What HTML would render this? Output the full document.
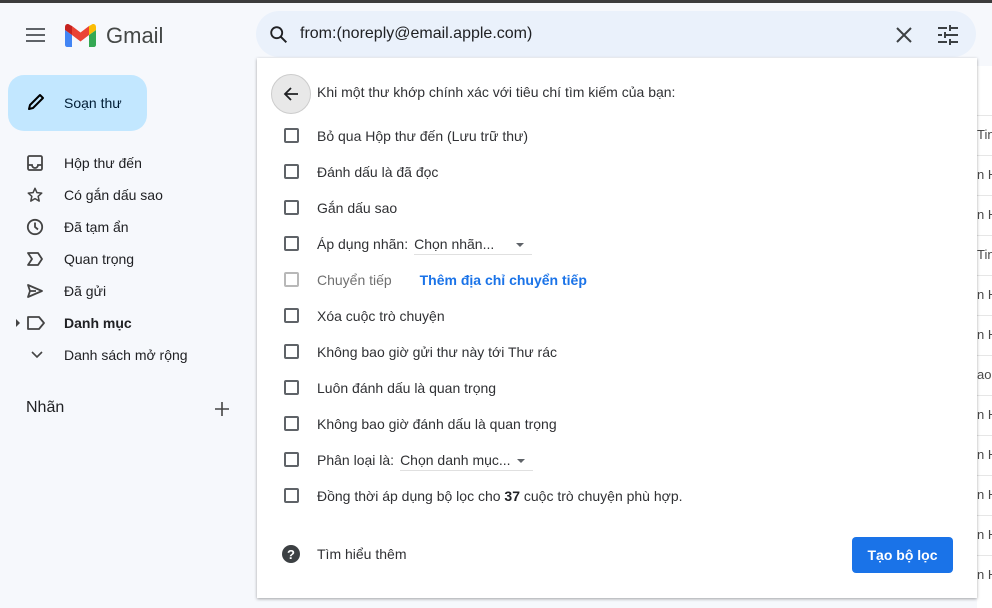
<!DOCTYPE html>
<html><head><meta charset="utf-8"><style>
*{box-sizing:border-box;margin:0;padding:0}
body{width:992px;height:608px;overflow:hidden;background:#f6f8fc;font-family:"Liberation Sans",Arial,sans-serif;color:#202124;position:relative}
.abs{position:absolute}
.topbar{left:0;top:0;width:992px;height:3px;background:#3c3c3c}
.nav{left:64px;font-size:14px;color:#202124}
.navi{left:26px}
.right{left:977px;top:115px;width:15px;height:493px;background:#fff}
.rline{left:977px;width:15px;height:1px;background:#e6e6e6}
.rt{left:977px;font-size:13px;color:#4a4a4a;white-space:nowrap;overflow:hidden;width:15px}
.panel{left:257px;top:58px;width:720px;height:540px;background:#fff;box-shadow:0 1px 3px rgba(0,0,0,.35)}
.row{position:absolute;left:0;height:20px;font-size:14px;color:#303134;line-height:20px}
.cb{position:absolute;left:27px;top:2px;width:15px;height:15px;border:2px solid #5f6368;border-radius:2px}
.lbl{position:absolute;left:60px;white-space:nowrap}
.sel{display:inline-block;border-bottom:1px solid #e0e0e0;margin-left:6px;padding-right:8px;position:relative}
.tri{display:inline-block;width:0;height:0;border-left:4px solid transparent;border-right:4px solid transparent;border-top:4px solid #5f6368;vertical-align:middle;margin-left:22px}
</style></head><body>
<div class="abs topbar"></div>
<svg class="abs" style="left:26px;top:27px" width="20" height="16"><rect x="0" y="1" width="19" height="2" fill="#5f6368"/><rect x="0" y="7" width="19" height="2" fill="#5f6368"/><rect x="0" y="13" width="19" height="2" fill="#5f6368"/></svg>
<svg class="abs" style="left:65px;top:24px" width="31" height="23" viewBox="0 0 31 23">
<path d="M2 23h5V11L0 6v15c0 1 1 2 2 2z" fill="#4285f4"/>
<path d="M24 23h5c1 0 2-1 2-2V6l-7 5z" fill="#34a853"/>
<path d="M24 2v9l7-5V3c0-3-3-4-5-2z" fill="#fbbc04"/>
<path d="M7 11V2l8.5 6.5L24 2v9l-8.5 6.5z" fill="#ea4335"/>
<path d="M0 3v3l7 5V2L5 1C3-1 0 0 0 3z" fill="#c5221f"/>
</svg>
<div class="abs" style="left:106px;top:23px;font-size:22px;color:#444746">Gmail</div>
<div class="abs" style="left:256px;top:11px;width:720px;height:46px;border-radius:24px;background:#eaf1fb"></div>
<svg class="abs" style="left:268px;top:24px" width="22" height="22" viewBox="0 0 24 24"><circle cx="9.5" cy="9.5" r="6" fill="none" stroke="#202124" stroke-width="2"/><path d="M14 14l6 6" stroke="#202124" stroke-width="2.2"/></svg>
<div class="abs" style="left:300px;top:25px;font-size:16px;color:#202124">from:(noreply@email.apple.com)</div>
<svg class="abs" style="left:895px;top:26px" width="18" height="18"><path d="M2 2l14 14M16 2L2 16" stroke="#3c4043" stroke-width="2"/></svg>
<svg class="abs" style="left:938px;top:25px" width="20" height="20" viewBox="0 0 20 20"><g fill="#3c4043"><rect x="0" y="2" width="9" height="2"/><rect x="13" y="2" width="7" height="2"/><rect x="11" y="0" width="2" height="6"/><rect x="0" y="9" width="4" height="2"/><rect x="8" y="9" width="12" height="2"/><rect x="6" y="7" width="2" height="6"/><rect x="0" y="16" width="9" height="2"/><rect x="13" y="16" width="7" height="2"/><rect x="11" y="14" width="2" height="6"/></g></svg>
<div class="abs" style="left:8px;top:75px;width:139px;height:56px;border-radius:16px;background:#c2e7ff"></div>
<svg class="abs" style="left:26px;top:92px" width="20" height="20" viewBox="0 0 20 20"><path d="M3 17l1-4L14 3l3 3L7 16z" fill="none" stroke="#000" stroke-width="2" stroke-linejoin="round"/></svg>
<div class="abs" style="left:64px;top:95px;font-size:14px;color:#001d35">Soạn thư</div>
<svg class="abs navi" style="top:154px" width="18" height="18" viewBox="0 0 18 18"><rect x="2" y="2" width="14" height="14" rx="1.5" fill="none" stroke="#444" stroke-width="1.8"/><path d="M2 11h4a3 3 0 006 0h4" fill="none" stroke="#444" stroke-width="1.8"/></svg>
<div class="abs nav" style="top:155px">Hộp thư đến</div>
<svg class="abs navi" style="top:186px" width="18" height="18" viewBox="0 0 24 24"><path d="M12 3l2.6 5.9 6.4.6-4.8 4.3 1.4 6.3L12 16.8 6.4 20.1l1.4-6.3L3 9.5l6.4-.6z" fill="none" stroke="#444" stroke-width="2" stroke-linejoin="round"/></svg>
<div class="abs nav" style="top:187px">Có gắn dấu sao</div>
<svg class="abs navi" style="top:218px" width="18" height="18" viewBox="0 0 18 18"><circle cx="9" cy="9" r="7.2" fill="none" stroke="#444" stroke-width="1.8"/><path d="M9 4.5V9l3 2.5" fill="none" stroke="#444" stroke-width="1.8"/></svg>
<div class="abs nav" style="top:219px">Đã tạm ẩn</div>
<svg class="abs navi" style="top:251px" width="18" height="16" viewBox="0 0 18 16"><path d="M2 2h10l4 6-4 6H2l4-6z" fill="none" stroke="#444" stroke-width="1.8" stroke-linejoin="round"/></svg>
<div class="abs nav" style="top:251px">Quan trọng</div>
<svg class="abs navi" style="top:283px" width="18" height="16" viewBox="0 0 18 16"><path d="M2 2l14 6-14 6 2-6zM4 8h6" fill="none" stroke="#444" stroke-width="1.8" stroke-linejoin="round"/></svg>
<div class="abs nav" style="top:283px">Đã gửi</div>
<svg class="abs" style="left:16px;top:319px" width="5" height="8"><path d="M0 0l4 4-4 4z" fill="#444"/></svg>
<svg class="abs navi" style="top:315px" width="20" height="16" viewBox="0 0 20 16"><path d="M2 2h11l5 6-5 6H2z" fill="none" stroke="#444" stroke-width="1.8" stroke-linejoin="round"/></svg>
<div class="abs nav" style="top:315px;font-weight:bold">Danh mục</div>
<svg class="abs" style="left:31px;top:351px" width="12" height="8"><path d="M1 1l5 5 5-5" fill="none" stroke="#444" stroke-width="1.6"/></svg>
<div class="abs nav" style="top:347px">Danh sách mở rộng</div>
<div class="abs" style="left:26px;top:399px;font-size:16px;color:#202124">Nhãn</div>
<svg class="abs" style="left:215px;top:402px" width="14" height="14"><path d="M7 0v14M0 7h14" stroke="#444" stroke-width="1.6"/></svg>
<div class="abs right"></div>
<div class="abs" style="left:977px;top:66px;width:15px;height:49px;background:#fff"></div>
<div class="abs rline" style="top:115px"></div>
<div class="abs rline" style="top:155px"></div><div class="abs rline" style="top:195px"></div><div class="abs rline" style="top:235px"></div><div class="abs rline" style="top:275px"></div><div class="abs rline" style="top:315px"></div><div class="abs rline" style="top:355px"></div><div class="abs rline" style="top:395px"></div><div class="abs rline" style="top:435px"></div><div class="abs rline" style="top:475px"></div><div class="abs rline" style="top:515px"></div><div class="abs rline" style="top:555px"></div>
<div class="abs rt" style="top:127px">Tin</div><div class="abs rt" style="top:167px">n H</div><div class="abs rt" style="top:207px">n H</div><div class="abs rt" style="top:247px">Tin</div><div class="abs rt" style="top:287px">n H</div><div class="abs rt" style="top:327px">n H</div><div class="abs rt" style="top:367px">ao</div><div class="abs rt" style="top:407px">n H</div><div class="abs rt" style="top:447px">n H</div><div class="abs rt" style="top:487px">n H</div><div class="abs rt" style="top:527px">n H</div><div class="abs rt" style="top:567px">n H</div>
<div class="abs panel">
  <div class="abs" style="left:14px;top:16px;width:40px;height:40px;border-radius:50%;background:#e8e8e8;border:1px solid #ccc"></div>
  <svg class="abs" style="left:25px;top:27px" width="18" height="18" viewBox="0 0 18 18"><path d="M16 9H3M9 3L3 9l6 6" fill="none" stroke="#202124" stroke-width="1.8"/></svg>
  <div class="abs" style="left:60px;top:26px;font-size:14px;color:#303134">Khi một thư khớp chính xác với tiêu chí tìm kiếm của bạn:</div>
  <div class="row" style="top:68px"><div class="cb"></div><div class="lbl">Bỏ qua Hộp thư đến (Lưu trữ thư)</div></div>
  <div class="row" style="top:104px"><div class="cb"></div><div class="lbl">Đánh dấu là đã đọc</div></div>
  <div class="row" style="top:140px"><div class="cb"></div><div class="lbl">Gắn dấu sao</div></div>
  <div class="row" style="top:176px"><div class="cb"></div><div class="lbl">Áp dụng nhãn:<span class="sel">Chọn nhãn...<span class="tri"></span></span></div></div>
  <div class="row" style="top:212px"><div class="cb" style="border-color:#b8b8b8"></div><div class="lbl" style="color:#707070">Chuyển tiếp <span style="color:#1a73e8;font-weight:bold;margin-left:24px">Thêm địa chỉ chuyển tiếp</span></div></div>
  <div class="row" style="top:248px"><div class="cb"></div><div class="lbl">Xóa cuộc trò chuyện</div></div>
  <div class="row" style="top:284px"><div class="cb"></div><div class="lbl">Không bao giờ gửi thư này tới Thư rác</div></div>
  <div class="row" style="top:320px"><div class="cb"></div><div class="lbl">Luôn đánh dấu là quan trọng</div></div>
  <div class="row" style="top:356px"><div class="cb"></div><div class="lbl">Không bao giờ đánh dấu là quan trọng</div></div>
  <div class="row" style="top:392px"><div class="cb"></div><div class="lbl">Phân loại là:<span class="sel">Chọn danh mục...<span class="tri" style="margin-left:6px"></span></span></div></div>
  <div class="row" style="top:428px"><div class="cb"></div><div class="lbl">Đồng thời áp dụng bộ lọc cho <b style="color:#202124">37</b> cuộc trò chuyện phù hợp.</div></div>
  <svg class="abs" style="left:25px;top:487px" width="18" height="18" viewBox="0 0 18 18"><circle cx="9" cy="9" r="9" fill="#3c4043"/><text x="9" y="14" font-size="13" font-weight="bold" fill="#fff" text-anchor="middle" font-family="Liberation Sans">?</text></svg>
  <div class="abs" style="left:60px;top:488px;font-size:14px;color:#303134">Tìm hiểu thêm</div>
  <div class="abs" style="left:595px;top:479px;width:101px;height:36px;border-radius:4px;background:#1a73e8;color:#fff;font-size:14px;font-weight:bold;text-align:center;line-height:36px">Tạo bộ lọc</div>
</div>
</body></html>
